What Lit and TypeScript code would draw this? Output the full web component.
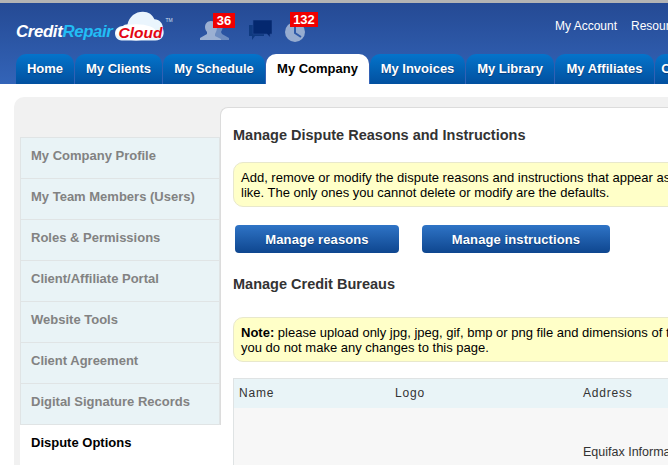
import { LitElement, html, css } from "lit";
import { customElement } from "lit/decorators.js";

const TABS = ["Home", "My Clients", "My Schedule", "My Company", "My Invoices", "My Library", "My Affiliates", "Cu"];
const SIDE = ["My Company Profile", "My Team Members (Users)", "Roles & Permissions", "Client/Affiliate Portal", "Website Tools", "Client Agreement", "Digital Signature Records"];

@customElement("app-root")
export class AppRoot extends LitElement {
  static styles = css`
    :host { display: block; width: 668px; height: 465px; overflow: hidden; background: #fff; font-family: "Liberation Sans", Arial, sans-serif; color: #000; }
    .header { height: 81px; border-top: 3px solid #b4b4b4; background: linear-gradient(#254a94, #3364b8); display: flex; flex-direction: column; overflow: hidden; }
    .top { height: 51px; display: flex; flex: none; }
    .logo { width: 190px; flex: none; display: flex; padding: 8px 0 0 16px; box-sizing: border-box; font-size: 16.8px; font-weight: bold; font-style: italic; letter-spacing: -0.35px; }
    .logo .w { color: #fff; margin-top: 11px; }
    .logo .c { color: #22bdf5; margin-top: 11px; }
    .cloud { position: relative; width: 50px; height: 33px; margin: 0 0 0 2px; flex: none; }
    .cloud svg { display: block; }
    .cloud span { position: absolute; left: 4px; top: 13px; color: #e30613; font-size: 15.5px; letter-spacing: 0; line-height: 17px; }
    .tm { font-size: 5px; font-style: normal; color: #d5e0f2; margin-top: 6px; letter-spacing: 0; font-weight: normal; margin-left: 1px; }
    .icons { width: 365px; flex: none; display: flex; }
    .ico { position: relative; flex: none; }
    .ico svg { display: block; }
    .badge { position: absolute; height: 15px; background: #f00000; color: #fff; font-size: 13px; font-weight: bold; line-height: 15px; text-align: center; }
    .b36 { left: 13px; top: -4px; width: 22px; }
    .b132 { left: 5px; top: -10px; width: 28px; }
    .i1 { margin: 14px 0 0 10px; width: 30px; }
    .i2 { margin: 17px 0 0 19px; width: 23px; }
    .i3 { margin: 19px 0 0 13px; width: 20px; }
    .links { display: flex; gap: 14px; color: #fff; font-size: 12px; padding-top: 16px; white-space: nowrap; }
    .tabs { display: flex; padding-left: 16px; gap: 1px; height: 30px; flex: none; }
    .tab { height: 30px; box-sizing: border-box; flex: none; border-radius: 10px 10px 0 0; background: linear-gradient(#0474cb, #02509f); color: #fff; font-size: 13px; font-weight: bold; line-height: 29px; text-align: center; text-shadow: 0 1px 1px #0a3a78; }
    .tab.on { background: #fff; color: #000; text-shadow: none; }
    .main { margin: 13px 0 0 14px; height: 368px; background: #f1f1f1; border-radius: 10px 0 0 0; padding: 10px 0 0 6px; display: flex; box-sizing: border-box; }
    .side { width: 200px; flex: none; padding-top: 30px; position: relative; z-index: 1; }
    .item { height: 41px; box-sizing: border-box; background: #e9f3f6; border: 1px solid #e0e4e5; border-top: 0; padding-left: 10px; line-height: 35px; font-size: 13px; font-weight: bold; color: #828282; white-space: nowrap; }
    .item:first-child { border-top: 1px solid #e0e4e5; height: 42px; }
    .item.on { background: #fff; color: #000; border: 0; padding-left: 11px; line-height: 35px; height: 60px; margin-right: -2px; }
    .card { width: 460px; flex: none; height: 380px; box-sizing: border-box; background: #fff; border: 1px solid #dcdcdc; border-right: 0; border-radius: 8px 0 0 0; padding: 18px 0 0 12px; }
    h2 { margin: 0; font-size: 14.5px; line-height: 18px; color: #333; font-weight: bold; white-space: nowrap; }
    .note { width: 470px; height: 45px; box-sizing: border-box; margin-top: 18px; background: #ffffc8; border: 1px solid #e8e8cc; border-radius: 10px; padding: 7px 0 0 7px; font-size: 13px; line-height: 15px; white-space: nowrap; overflow: hidden; }
    .btns { display: flex; margin: 18px 0 0 2px; gap: 23px; }
    .btn { height: 28px; border-radius: 4px; background: linear-gradient(#2f74c6, #0e468f); color: #fff; font-size: 13px; font-weight: bold; letter-spacing: 0.1px; line-height: 29px; text-align: center; text-shadow: 0 1px 1px #0a3a78; box-sizing: border-box; }
    .h2b { margin-top: 22px; }
    .note.n2 { margin-top: 24px; }
    .tbl { margin-top: 16px; width: 470px; height: 100px; background: #f7f7f7; border: 1px solid #dfe3e4; border-right: 0; box-sizing: border-box; }
    .thead { height: 29px; background: #e9f4f7; display: grid; grid-template-columns: 156px 188px 1fr; padding-left: 5px; font-size: 12px; letter-spacing: 0.8px; line-height: 28px; color: #333; }
    .tbody { display: grid; grid-template-columns: 344px 1fr; padding: 37px 0 0 5px; font-size: 12.5px; color: #333; white-space: nowrap; }
  `;

  private tabWidths = [58, 87, 102, 103, 95, 88, 99, 30];

  render() {
    return html`
      <div class="header">
        <div class="top">
          <div class="logo">
            <span class="w">Credit</span><span class="c">Repair</span>
            <div class="cloud">
              <svg width="50" height="33" viewBox="0 0 52 33">
                <path d="M7 30C2 30 0 26 0 22.500C0 18 4 15 8 15C9 14 11 13 13 13C15 5 21 0 29 0C35 0 39 3 41 8C46 8 50 12 50 18C52 24 49 30 42 30Z" fill="#eaf5fd"/>
                <ellipse cx="22" cy="21.500" rx="21" ry="8.500" fill="#fff"/>
              </svg>
              <span>Cloud</span>
            </div>
            <span class="tm">TM</span>
          </div>
          <div class="icons">
            <div class="ico i1">
              <svg width="30" height="24" viewBox="0 0 30 24">
                <path d="M18 3c3 0 5 2 5 6 0 2-1 4-2 6l1 2 7 4v2H17l-2-3-4-3 1-2c-1-2-1-4-1-6 0-4 3-6 7-6z" fill="#6d8cc0"/>
                <path d="M11 4c4 0 6 3 6 6 0 3-1 5-2 7v2l6 3v1H0v-2l7-4v-2C6 14 5 12 5 10c0-3 2-6 6-6z" fill="#9bb0d2"/>
              </svg>
              <span class="badge b36">36</span>
            </div>
            <div class="ico i2">
              <svg width="23" height="21" viewBox="0 0 23 21">
                <path d="M0 5h15v11H6l-3 4v-4H0z" fill="#0f3a80"/>
                <path d="M4 0h19v14h-2l0 3-3-3H4z" fill="#04286f" stroke="#254a94" stroke-width=".6"/>
              </svg>
            </div>
            <div class="ico i3">
              <svg width="20" height="20" viewBox="0 0 20 20">
                <circle cx="10" cy="10" r="10" fill="#96acd0"/>
                <path d="M10 4v7l6 4" fill="none" stroke="#2f5aa8" stroke-width="2"/>
              </svg>
              <span class="badge b132">132</span>
            </div>
          </div>
          <div class="links"><span>My Account</span><span>Resources</span></div>
        </div>
        <div class="tabs">
          ${TABS.map((t, i) => html`<div class="tab ${i === 3 ? "on" : ""}" style="width:${this.tabWidths[i]}px">${t}</div>`)}
        </div>
      </div>
      <div class="main">
        <div class="side">
          ${SIDE.map((s) => html`<div class="item">${s}</div>`)}
          <div class="item on">Dispute Options</div>
        </div>
        <div class="card">
          <h2>Manage Dispute Reasons and Instructions</h2>
          <div class="note">Add, remove or modify the dispute reasons and instructions that appear as options when you add or edit a dispute item, or<br />like. The only ones you cannot delete or modify are the defaults.</div>
          <div class="btns">
            <div class="btn" style="width:164px">Manage reasons</div>
            <div class="btn" style="width:188px">Manage instructions</div>
          </div>
          <h2 class="h2b">Manage Credit Bureaus</h2>
          <div class="note n2"><b>Note:</b> please upload only jpg, jpeg, gif, bmp or png file and dimensions of the logo must be smaller, and<br />you do not make any changes to this page.</div>
          <div class="tbl">
            <div class="thead"><span>Name</span><span>Logo</span><span>Address</span></div>
            <div class="tbody"><span></span><span>Equifax Information Services</span></div>
          </div>
        </div>
      </div>
    `;
  }
}
